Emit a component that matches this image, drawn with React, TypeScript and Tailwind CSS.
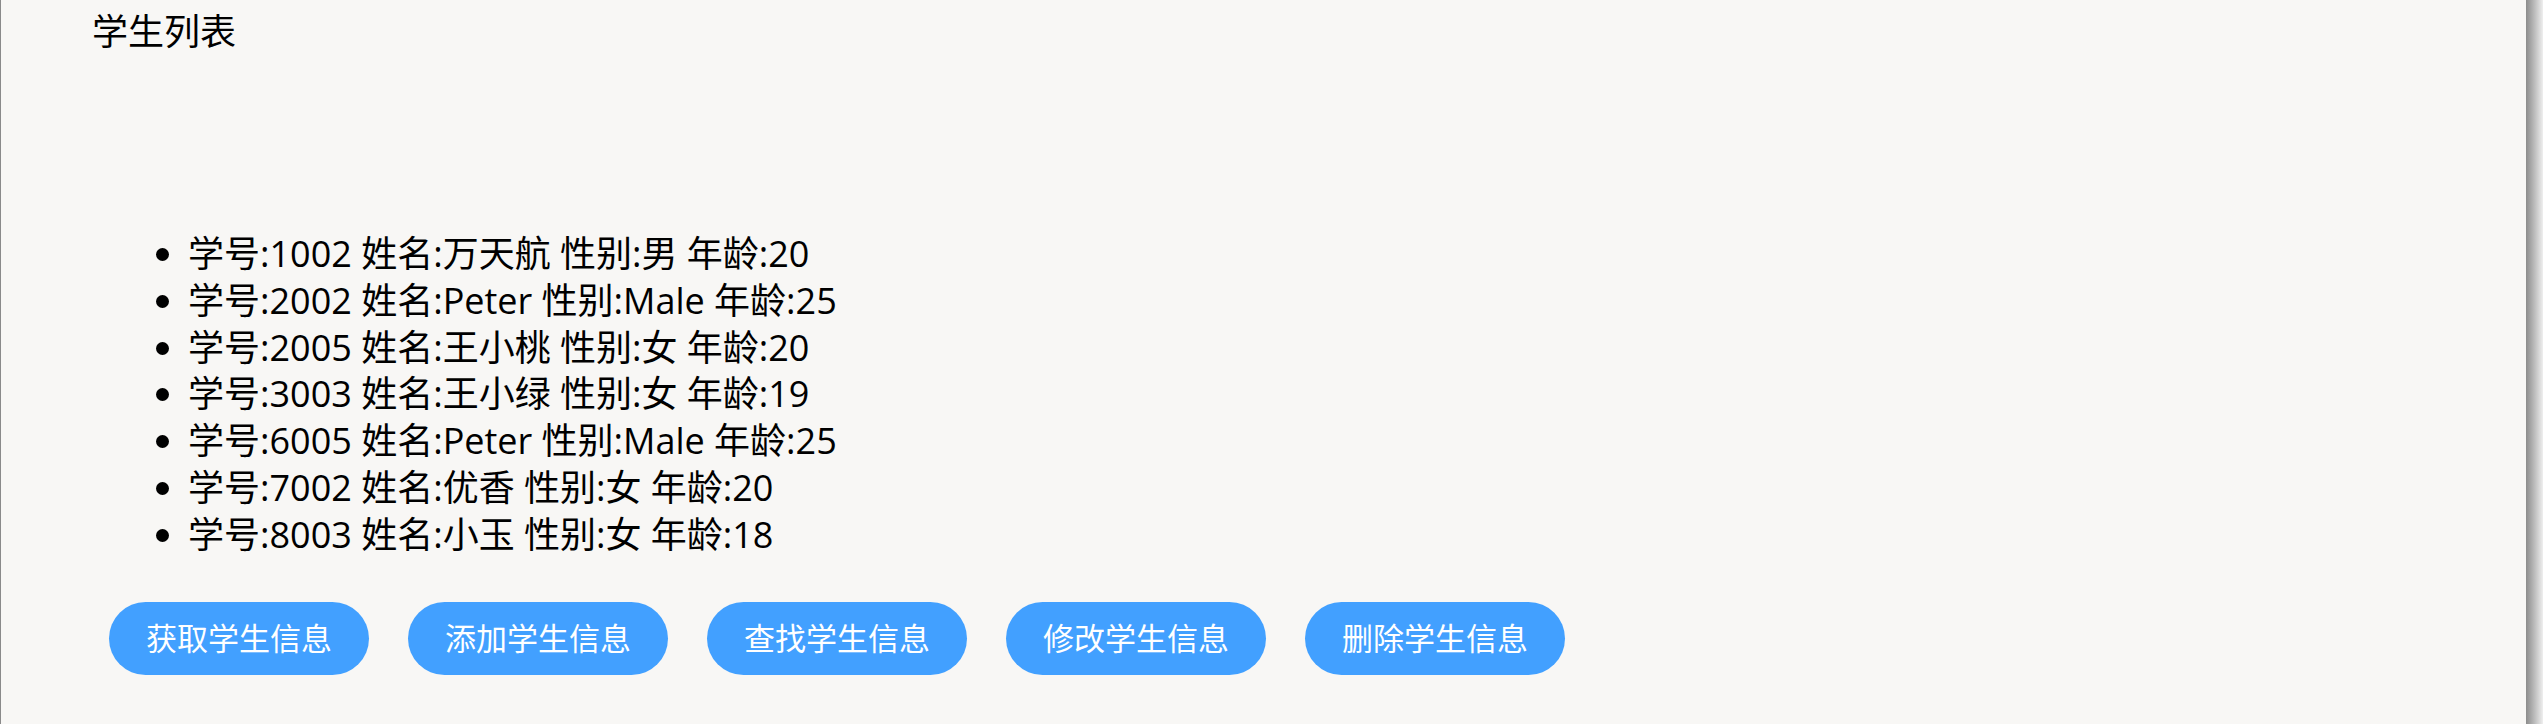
const students = [
  { id: 1002, name: "万天航", gender: "男", age: 20 },
  { id: 2002, name: "Peter", gender: "Male", age: 25 },
  { id: 2005, name: "王小桃", gender: "女", age: 20 },
  { id: 3003, name: "王小绿", gender: "女", age: 19 },
  { id: 6005, name: "Peter", gender: "Male", age: 25 },
  { id: 7002, name: "优香", gender: "女", age: 20 },
  { id: 8003, name: "小玉", gender: "女", age: 18 },
];

const actions = ["获取学生信息", "添加学生信息", "查找学生信息", "修改学生信息", "删除学生信息"];

export default function App() {
  return (
    <div
      className="flex h-[724px] w-full bg-[#f8f7f5] text-black"
      style={{ fontFamily: '"Open Sans", "Noto Sans CJK SC", sans-serif' }}
    >
      <div className="flex-1 border-l border-[#8a8a8a]">
        <h1 className="pl-[91px] pt-[8px] text-[36px] leading-[47px] font-normal">学生列表</h1>

        <ul className="mt-[176px] list-disc pl-[187px] text-[36px] leading-[46.8px]">
          {students.map((s) => (
            <li key={s.id}>
              学号:{s.id} 姓名:{s.name} 性别:{s.gender} 年龄:{s.age}
            </li>
          ))}
        </ul>

        <div className="mt-[43px] flex gap-[39px] pl-[108px]">
          {actions.map((a) => (
            <button
              key={a}
              className="h-[73px] w-[260px] rounded-full bg-[#42a0ff] text-[31px] text-white"
            >
              {a}
            </button>
          ))}
        </div>
      </div>
      <div className="w-[17px] bg-gradient-to-r from-[#8c8c8c] to-[#efefef]" />
    </div>
  );
}
